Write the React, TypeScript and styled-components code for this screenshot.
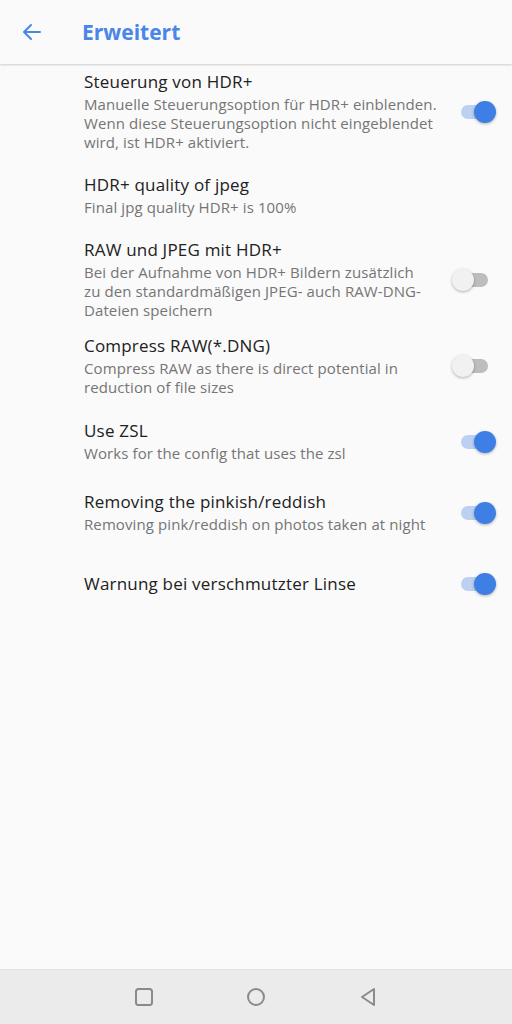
import React from "react";
import styled, { createGlobalStyle } from "styled-components";

const GlobalStyle = createGlobalStyle`
    html, body {
        margin: 0;
        padding: 0;
        background: #fafafa;
    }
    body {
        font-family: "Open Sans", "Noto Sans", sans-serif;
    }
`;

const Screen = styled.div`
    display: flex;
    flex-direction: column;
    width: 512px;
    height: 1024px;
    background: #fafafa;
    overflow: hidden;
`;

const Header = styled.header`
    display: flex;
    align-items: center;
    height: 64px;
    flex-shrink: 0;
    padding-left: 20px;
    gap: 38px;
    background: #fafafa;
    box-shadow: 0 1px 2px rgba(0, 0, 0, 0.18);
    position: relative;
    z-index: 1;
`;

const Title = styled.h1`
    margin: 0;
    font-size: 21px;
    font-weight: 700;
    color: #4a86e8;
`;

const List = styled.div`
    display: flex;
    flex-direction: column;
    flex: 1;
    padding-top: 1px;
`;

const Row = styled.div<{ $h: number }>`
    display: flex;
    align-items: center;
    justify-content: space-between;
    height: ${(p) => p.$h}px;
    padding: 0 15px 0 84px;
`;

const Texts = styled.div`
    display: flex;
    flex-direction: column;
    width: 358px;
`;

const RowTitle = styled.div`
    font-size: 17px;
    line-height: 22px;
    letter-spacing: 0.2px;
    color: #212121;
`;

const Summary = styled.div`
    margin-top: 2px;
    font-size: 15px;
    line-height: 19px;
    letter-spacing: 0.1px;
    color: #757575;
    white-space: pre-line;
`;

const SwitchBox = styled.div<{ $on: boolean }>`
    position: relative;
    width: 36px;
    height: 24px;
    flex-shrink: 0;

    &::before {
        content: "";
        position: absolute;
        left: 0;
        right: 9px;
        top: 5px;
        height: 14px;
        border-radius: 7px;
        background: ${(p) => (p.$on ? "#bcd0f2" : "#bdbdbd")};
    }

    &::after {
        content: "";
        position: absolute;
        top: 1px;
        left: ${(p) => (p.$on ? "13px" : "-9px")};
        width: 22px;
        height: 22px;
        border-radius: 50%;
        background: ${(p) => (p.$on ? "#3e7fe6" : "#f1f1f1")};
        box-shadow: 0 1px 3px rgba(0, 0, 0, 0.3);
    }
`;

const NavBar = styled.nav`
    display: flex;
    align-items: center;
    justify-content: center;
    gap: 82px;
    height: 54px;
    flex-shrink: 0;
    background: #ebebeb;
    border-top: 1px solid #e2e2e2;
`;

const NavIcon = styled.svg`
    width: 30px;
    height: 30px;
`;

type Pref = {
    title: string;
    summary?: string;
    on?: boolean;
    h: number;
};

const prefs: Pref[] = [
    {
        title: "Steuerung von HDR+",
        summary:
            "Manuelle Steuerungsoption für HDR+ einblenden. Wenn diese Steuerungsoption nicht eingeblendet wird, ist HDR+ aktiviert.",
        on: true,
        h: 93,
    },
    { title: "HDR+ quality of jpeg", summary: "Final jpg quality HDR+ is 100%", h: 75 },
    {
        title: "RAW und JPEG mit HDR+",
        summary:
            "Bei der Aufnahme von HDR+ Bildern zusätzlich\nzu den standardmäßigen JPEG- auch RAW-DNG-Dateien speichern",
        on: false,
        h: 93,
    },
    {
        title: "Compress RAW(*.DNG)",
        summary: "Compress RAW as there is direct potential in reduction of file sizes",
        on: false,
        h: 80,
    },
    { title: "Use ZSL", summary: "Works for the config that uses the zsl", on: true, h: 71 },
    {
        title: "Removing the pinkish/reddish",
        summary: "Removing pink/reddish on photos taken at night",
        on: true,
        h: 71,
    },
    { title: "Warnung bei verschmutzter Linse", on: true, h: 72 },
];

const App: React.FC = () => {
    return (
        <Screen>
            <GlobalStyle />
            <Header>
                <svg width="24" height="24" viewBox="0 0 24 24">
                    <path
                        d="M20 12H5M11 5l-7 7 7 7"
                        fill="none"
                        stroke="#4a86e8"
                        strokeWidth="2"
                        strokeLinecap="round"
                        strokeLinejoin="round"
                    />
                </svg>
                <Title>Erweitert</Title>
            </Header>
            <List>
                {prefs.map((p) => (
                    <Row key={p.title} $h={p.h}>
                        <Texts>
                            <RowTitle>{p.title}</RowTitle>
                            {p.summary && <Summary>{p.summary}</Summary>}
                        </Texts>
                        {p.on !== undefined && <SwitchBox $on={p.on} />}
                    </Row>
                ))}
            </List>
            <NavBar>
                <NavIcon viewBox="0 0 30 30">
                    <rect x="7" y="7" width="16" height="16" rx="2.5" fill="none" stroke="#8a8a8a" strokeWidth="2" />
                </NavIcon>
                <NavIcon viewBox="0 0 30 30">
                    <circle cx="15" cy="15" r="8" fill="none" stroke="#8a8a8a" strokeWidth="2" />
                </NavIcon>
                <NavIcon viewBox="0 0 30 30">
                    <path d="M21 7v16L9 15z" fill="none" stroke="#8a8a8a" strokeWidth="2" strokeLinejoin="round" />
                </NavIcon>
            </NavBar>
        </Screen>
    );
};

export default App;
